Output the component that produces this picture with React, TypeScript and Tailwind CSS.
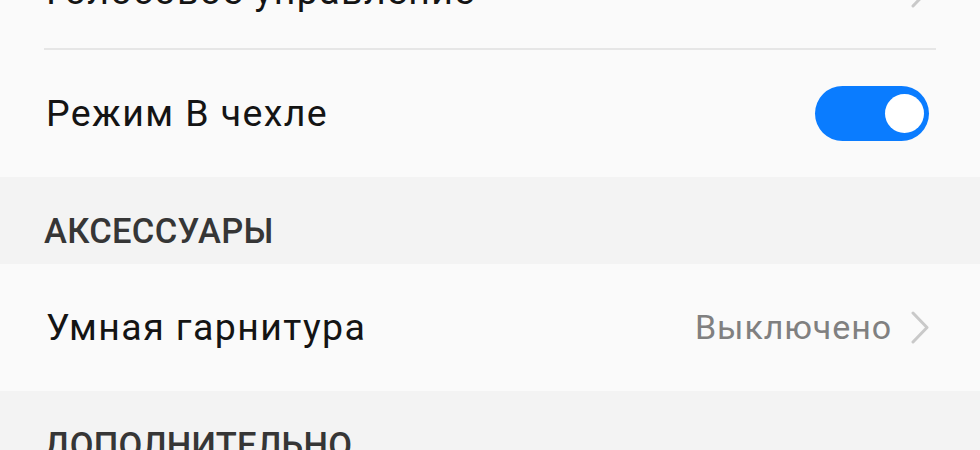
const Chevron = () => (
  <svg width="18" height="33" viewBox="0 0 18 33" fill="none">
    <polyline
      points="2,2 16,16.5 2,31"
      stroke="#c9c9c9"
      strokeWidth="3"
      strokeLinecap="round"
      strokeLinejoin="round"
    />
  </svg>
);

const Toggle = ({ on }: { on: boolean }) => (
  <div
    className={`w-[114px] h-[55px] rounded-full flex items-center px-[5px] ${on ? "bg-[#0a7cff] justify-end" : "bg-[#d9d9d9] justify-start"}`}
  >
    <div className="w-[39px] h-[39px] rounded-full bg-white" />
  </div>
);

const Row = ({
  label,
  value,
  toggle,
  chevron,
  className = "",
}: {
  label: string;
  value?: string;
  toggle?: boolean;
  chevron?: boolean;
  className?: string;
}) => (
  <div
    className={`h-[127px] flex items-center justify-between pl-[46px] pr-[51px] ${className}`}
  >
    <span className="text-[37.5px] tracking-[1.4px] text-[#141414]">
      {label}
    </span>
    <div className="flex items-center gap-[19px]">
      {value && (
        <span className="text-[34px] tracking-[0.9px] text-[#808080]">
          {value}
        </span>
      )}
      {chevron && <Chevron />}
      {toggle !== undefined && <Toggle on={toggle} />}
    </div>
  </div>
);

const SectionHeader = ({ title }: { title: string }) => (
  <div className="h-[87px] bg-[#f3f3f3] flex items-end pl-[44px] pb-[16px]">
    <span className="text-[34.5px] leading-none tracking-[0.3px] font-medium text-[#363636]">
      {title}
    </span>
  </div>
);

export default function App() {
  return (
    <div
      className="w-[980px] h-[450px] overflow-hidden bg-[#fafafa]"
      style={{ fontFamily: "Roboto, 'Noto Sans', sans-serif" }}
    >
      <div className="-mt-[78px]">
        <Row label="Голосовое управление" chevron className="pt-[12px]" />
      </div>
      <div className="mx-[44px] h-[2px] bg-[#e6e6e6] -mt-[1px]" />
      <Row label="Режим В чехле" toggle />
      <SectionHeader title="АКСЕССУАРЫ" />
      <Row label="Умная гарнитура" value="Выключено" chevron />
      <SectionHeader title="ДОПОЛНИТЕЛЬНО" />
    </div>
  );
}
